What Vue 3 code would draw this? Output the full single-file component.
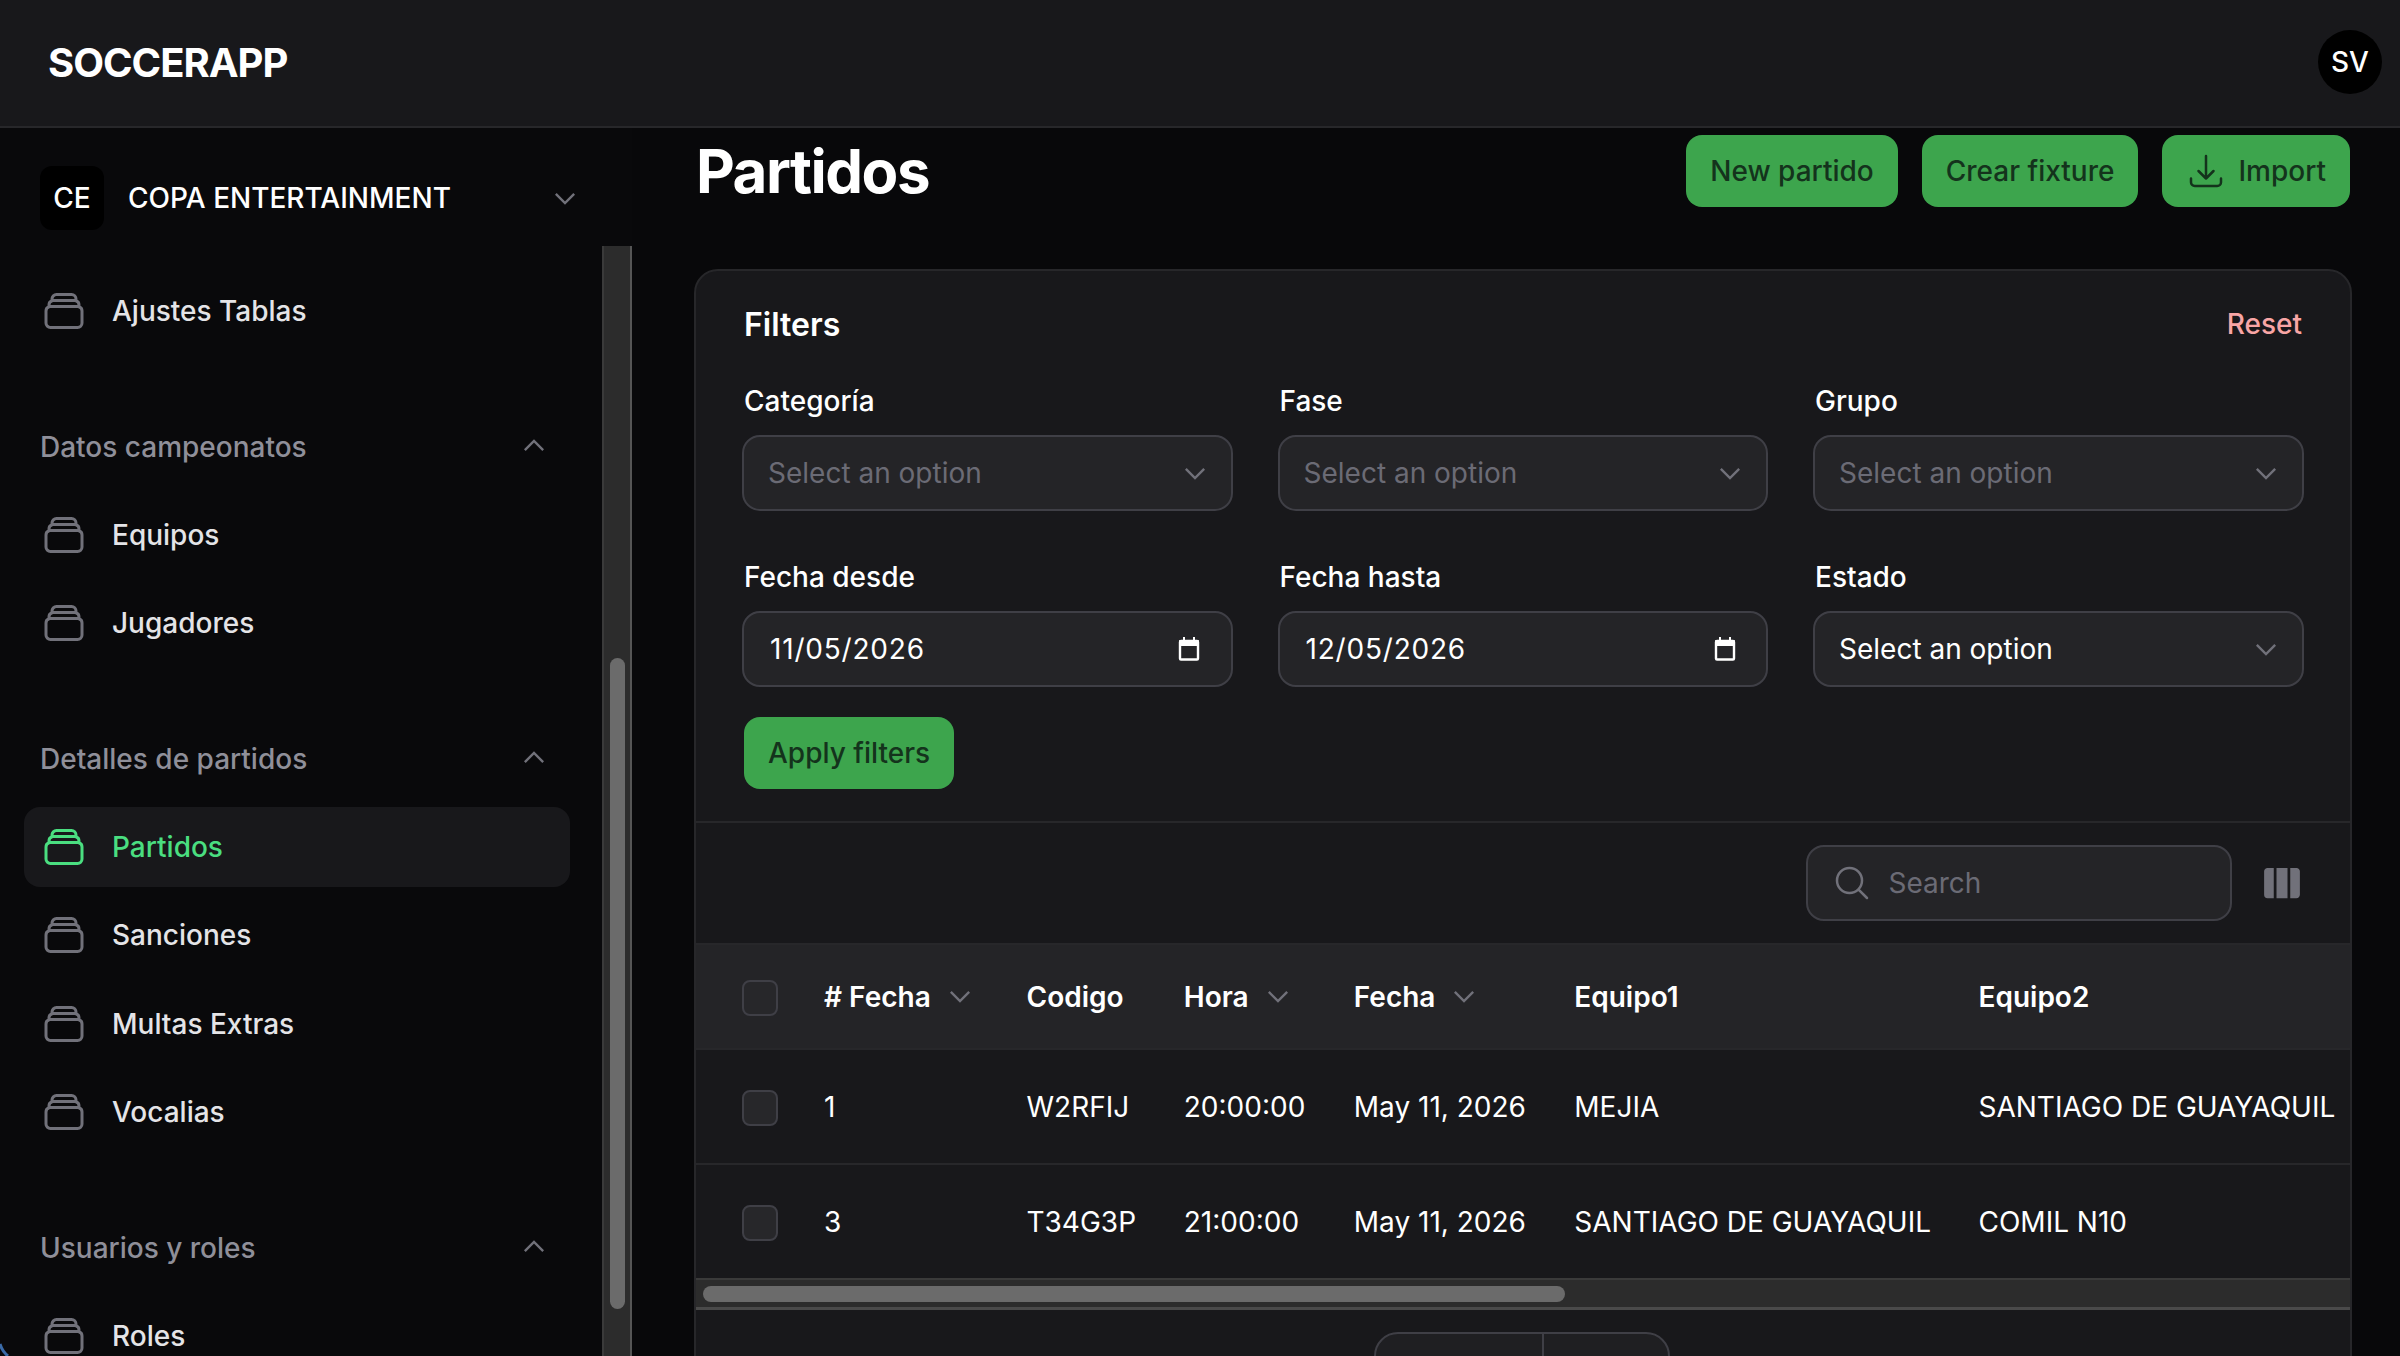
<script setup>
const navGroups = [
  { label: null, items: [{ name: 'Ajustes Tablas' }] },
  { label: 'Datos campeonatos', items: [{ name: 'Equipos' }, { name: 'Jugadores' }] },
  {
    label: 'Detalles de partidos',
    items: [
      { name: 'Partidos', active: true },
      { name: 'Sanciones' },
      { name: 'Multas Extras' },
      { name: 'Vocalias' },
    ],
  },
  { label: 'Usuarios y roles', items: [{ name: 'Roles' }] },
]

const filters = [
  { label: 'Categoría', placeholder: 'Select an option', type: 'select' },
  { label: 'Fase', placeholder: 'Select an option', type: 'select' },
  { label: 'Grupo', placeholder: 'Select an option', type: 'select' },
  { label: 'Fecha desde', value: '11/05/2026', type: 'date' },
  { label: 'Fecha hasta', value: '12/05/2026', type: 'date' },
  { label: 'Estado', value: 'Select an option', type: 'select' },
]

const columns = [
  { label: '# Fecha', sortable: true },
  { label: 'Codigo' },
  { label: 'Hora', sortable: true },
  { label: 'Fecha', sortable: true },
  { label: 'Equipo1' },
  { label: 'Equipo2' },
]

const rows = [
  ['1', 'W2RFIJ', '20:00:00', 'May 11, 2026', 'MEJIA', 'SANTIAGO DE GUAYAQUIL'],
  ['3', 'T34G3P', '21:00:00', 'May 11, 2026', 'SANTIAGO DE GUAYAQUIL', 'COMIL N10'],
]

const stackIcon = 'M6 6.878V6a2.25 2.25 0 012.25-2.25h7.5A2.25 2.25 0 0118 6v.878m-12 0c.235-.083.487-.128.75-.128h10.5c.263 0 .515.045.75.128m-12 0A2.25 2.25 0 004.5 9v.878m13.5-3A2.25 2.25 0 0119.5 9v.878m0 0a2.246 2.246 0 00-.75-.128H5.25c-.263 0-.515.045-.75.128m15 0A2.25 2.25 0 0121 12v6a2.25 2.25 0 01-2.25 2.25H5.25A2.25 2.25 0 013 18v-6c0-.98.626-1.813 1.5-2.122'
</script>

<template>
  <div class="app">
    <header class="topbar">
      <span class="brand">SOCCERAPP</span>
      <span class="avatar">SV</span>
    </header>

    <div class="layout">
      <aside class="sidebar">
        <div class="tenant">
          <span class="tenant-badge">CE</span>
          <span class="tenant-name">COPA ENTERTAINMENT</span>
          <svg class="chev tenant-chev" viewBox="0 0 24 14" aria-hidden="true"><path d="M2 2l10 10L22 2" /></svg>
        </div>

        <div class="side-scroll">
          <nav class="nav">
            <section v-for="(group, i) in navGroups" :key="i" class="nav-group">
              <div v-if="group.label" class="group-label">
                <span>{{ group.label }}</span>
                <svg class="chev chev-up" viewBox="0 0 24 14" aria-hidden="true"><path d="M2 12L12 2l10 10" /></svg>
              </div>
              <ul class="nav-list">
                <li v-for="item in group.items" :key="item.name" class="nav-item" :class="{ active: item.active }">
                  <svg class="nav-icon" viewBox="0 0 24 24" aria-hidden="true"><path :d="stackIcon" /></svg>
                  <span>{{ item.name }}</span>
                </li>
              </ul>
            </section>
          </nav>
          <div class="vbar"><div class="vthumb"></div></div>
        </div>
      </aside>

      <main class="main">
        <div class="page-head">
          <h1>Partidos</h1>
          <div class="actions">
            <button class="btn">New partido</button>
            <button class="btn">Crear fixture</button>
            <button class="btn btn-icon">
              <svg viewBox="0 0 24 24" aria-hidden="true"><path d="M3 16.5v2.25A2.25 2.25 0 0 0 5.25 21h13.5A2.25 2.25 0 0 0 21 18.75V16.5M16.5 12 12 16.5m0 0L7.5 12m4.5 4.5V3" /></svg>
              Import
            </button>
          </div>
        </div>

        <section class="card">
          <div class="filters">
            <div class="filters-head">
              <h2>Filters</h2>
              <span class="reset">Reset</span>
            </div>
            <div class="filter-grid">
              <div v-for="f in filters" :key="f.label" class="field">
                <label>{{ f.label }}</label>
                <div class="control" :class="f.type">
                  <span :class="{ placeholder: f.placeholder }">{{ f.placeholder || f.value }}</span>
                  <svg v-if="f.type === 'select'" class="chev" viewBox="0 0 24 14" aria-hidden="true"><path d="M2 2l10 10L22 2" /></svg>
                  <svg v-else class="calendar" viewBox="0 0 22 24" aria-hidden="true">
                    <path class="cal-fill" d="M5 0h2v3h8V0h2v3h3a1 1 0 0 1 1 1v5H1V4a1 1 0 0 1 1-1h3z" />
                    <rect class="cal-line" x="2" y="4" width="18" height="18.5" rx="1" />
                  </svg>
                </div>
              </div>
            </div>
            <button class="btn apply">Apply filters</button>
          </div>

          <div class="toolbar">
            <div class="search">
              <svg viewBox="0 0 24 24" aria-hidden="true"><path d="m21 21-5.197-5.197m0 0A7.5 7.5 0 1 0 5.196 5.196a7.5 7.5 0 0 0 10.607 10.607Z" /></svg>
              <span>Search</span>
            </div>
            <svg class="columns-icon" viewBox="0 0 24 24" aria-hidden="true">
              <path d="M15 3.75H9v16.5h6V3.75ZM16.5 20.25h3.375c1.035 0 1.875-.84 1.875-1.875V5.625c0-1.036-.84-1.875-1.875-1.875H16.5v16.5ZM4.125 3.75H7.5v16.5H4.125A1.875 1.875 0 0 1 2.25 18.375V5.625c0-1.036.84-1.875 1.875-1.875Z" />
            </svg>
          </div>

          <div class="table-wrap">
            <table>
              <thead>
                <tr>
                  <th class="check-cell"><span class="check"></span></th>
                  <th v-for="col in columns" :key="col.label">
                    <span class="th-inner">
                      {{ col.label }}
                      <svg v-if="col.sortable" class="chev" viewBox="0 0 24 14" aria-hidden="true"><path d="M2 2l10 10L22 2" /></svg>
                    </span>
                  </th>
                </tr>
              </thead>
              <tbody>
                <tr v-for="row in rows" :key="row[1]">
                  <td class="check-cell"><span class="check"></span></td>
                  <td v-for="(cell, i) in row" :key="i">{{ cell }}</td>
                </tr>
              </tbody>
            </table>
          </div>
          <div class="hbar"><div class="hthumb"></div></div>

          <div class="pager">
            <div class="pager-group">
              <span class="pager-a"></span>
              <span class="pager-b"></span>
            </div>
          </div>
        </section>
      </main>
    </div>

    <svg class="window-corner" viewBox="0 0 10 13" aria-hidden="true"><path d="M0 1c1.5 5 4 9 8 12" /></svg>
  </div>
</template>

<style scoped>
.app {
  position: relative;
  height: 1356px;
  overflow: hidden;
  display: flex;
  flex-direction: column;
  background: #09090b;
  color: #fff;
  font-family: Inter, "Liberation Sans", sans-serif;
  font-size: 28px;
}

.window-corner {
  position: absolute;
  left: 0;
  bottom: 0;
  width: 10px;
  height: 13px;
  fill: none;
  stroke: #3a6aa8;
  stroke-width: 3;
}

.topbar {
  height: 128px;
  flex-shrink: 0;
  box-sizing: border-box;
  display: flex;
  align-items: center;
  justify-content: space-between;
  padding: 0 18px 2px 48px;
  background: #18181b;
  border-bottom: 2px solid #27272a;
}

.brand {
  font-size: 40px;
  font-weight: 700;
  letter-spacing: -1px;
}

.avatar {
  width: 64px;
  height: 64px;
  border-radius: 50%;
  background: #000;
  display: flex;
  align-items: center;
  justify-content: center;
  font-weight: 500;
}

.layout {
  flex: 1;
  display: flex;
  min-height: 0;
}

.sidebar {
  width: 632px;
  flex-shrink: 0;
  display: flex;
  flex-direction: column;
  min-height: 0;
}

.tenant {
  display: flex;
  align-items: center;
  padding: 38px 56px 16px 40px;
}

.tenant-badge {
  width: 64px;
  height: 64px;
  border-radius: 12px;
  background: #000;
  display: flex;
  align-items: center;
  justify-content: center;
  font-weight: 500;
  margin-right: 24px;
}

.tenant-name {
  flex: 1;
  font-weight: 500;
  color: #fff;
}

.chev {
  width: 22px;
  height: 13px;
  flex-shrink: 0;
  fill: none;
  stroke: #71717a;
  stroke-width: 2.6;
}

.chev-up {
  margin-top: -3px;
}

.side-scroll {
  flex: 1;
  min-height: 0;
  display: flex;
  overflow: hidden;
}

.nav {
  flex: 1;
  padding: 25px 32px 0 24px;
  min-width: 0;
}

.nav-group + .nav-group {
  margin-top: 56px;
}

.group-label {
  height: 80px;
  margin-bottom: 7.5px;
  display: flex;
  align-items: center;
  justify-content: space-between;
  padding: 0 25px 0 16px;
  color: #8f8f99;
  font-weight: 500;
}

.nav-list {
  list-style: none;
  margin: 0;
  padding: 0;
  display: flex;
  flex-direction: column;
  gap: 8.5px;
}

.nav-item {
  height: 80px;
  display: flex;
  align-items: center;
  gap: 24px;
  padding: 0 16px;
  border-radius: 16px;
  color: #e4e4e7;
  font-weight: 500;
}

.nav-icon {
  width: 48px;
  height: 48px;
  flex-shrink: 0;
  fill: none;
  stroke: #71717a;
  stroke-width: 1.5;
  stroke-linecap: round;
  stroke-linejoin: round;
}

.nav-item.active {
  background: #18181b;
  color: #4ade80;
}

.nav-item.active .nav-icon {
  stroke: #4ade80;
}

.vbar {
  width: 30px;
  box-sizing: border-box;
  flex-shrink: 0;
  background: #2c2c2c;
  border-left: 2px solid #3a3a3a;
  border-right: 2px solid #555;
  padding: 412px 5px 47px 6px;
}

.vthumb {
  height: 100%;
  border-radius: 8px;
  background: #6b6b6b;
}

.main {
  flex: 1;
  min-width: 0;
  padding: 7px 48px 0 62px;
  background: #08080a;
}

.page-head {
  display: flex;
  align-items: center;
  justify-content: space-between;
  margin-bottom: 62px;
  padding-right: 2px;
}

h1 {
  margin: 0 0 0 2px;
  font-size: 60px;
  font-weight: 700;
  letter-spacing: -1.5px;
  line-height: 72px;
}

.actions {
  display: flex;
  gap: 24px;
}

.btn {
  height: 72px;
  box-sizing: border-box;
  border: 0;
  border-radius: 16px;
  padding: 0 24px;
  background: #3da54d;
  color: #14331c;
  font: 500 28px Inter, "Liberation Sans", sans-serif;
  display: inline-flex;
  align-items: center;
}

.btn-icon {
  gap: 12px;
}

.btn-icon svg {
  width: 40px;
  height: 40px;
  fill: none;
  stroke: #14331c;
  stroke-width: 1.5;
  stroke-linecap: round;
  stroke-linejoin: round;
}

.card {
  background: #18181b;
  border: 2px solid #27272a;
  border-radius: 24px;
}

.filters {
  padding: 32px 48px 32px 48px;
}

.filters-head {
  display: flex;
  align-items: center;
  justify-content: space-between;
  height: 42px;
  margin-bottom: 36px;
}

h2 {
  margin: 0;
  font-size: 32px;
  font-weight: 600;
}

.reset {
  color: #f8a5a5;
  font-weight: 500;
}

.filter-grid {
  display: grid;
  grid-template-columns: repeat(3, 490.5px);
  gap: 46px 45px;
  margin-left: -2px;
}

.field label {
  display: block;
  margin: 0 0 14px 2px;
  line-height: 40px;
  font-weight: 500;
}

.control {
  height: 76px;
  box-sizing: border-box;
  display: flex;
  align-items: center;
  justify-content: space-between;
  padding: 0 25px 0 24px;
  background: #242427;
  border: 2px solid #3f3f46;
  border-radius: 18px;
  font-weight: 400;
}

.control.date {
  padding: 0 30.5px 0 26px;
  letter-spacing: 0.8px;
}

.placeholder {
  color: #6b6b75;
}

.calendar {
  width: 22px;
  height: 24px;
}

.cal-fill {
  fill: #fff;
}

.cal-line {
  fill: none;
  stroke: #fff;
  stroke-width: 2.4;
}

.apply {
  margin-top: 30px;
  display: flex;
}

.toolbar {
  height: 122px;
  box-sizing: border-box;
  border-top: 2px solid #27272a;
  display: flex;
  align-items: center;
  justify-content: flex-end;
  gap: 28px;
  padding: 0 46.5px 0 0;
}

.search {
  width: 426px;
  height: 76px;
  box-sizing: border-box;
  display: flex;
  align-items: center;
  gap: 16.5px;
  padding: 0 28px 0 24.5px;
  background: #242427;
  border: 2px solid #3f3f46;
  border-radius: 18px;
  color: #6b6b75;
}

.search svg {
  width: 40px;
  height: 40px;
  fill: none;
  stroke: #71717a;
  stroke-width: 1.5;
  stroke-linecap: round;
  stroke-linejoin: round;
}

.columns-icon {
  width: 44px;
  height: 44px;
  fill: #71717a;
}

.table-wrap {
  overflow: hidden;
  border-top: 2px solid #27272a;
}

table {
  table-layout: fixed;
  border-collapse: collapse;
  width: 1656px;
}

th,
td {
  padding: 0 25px;
  text-align: left;
  white-space: nowrap;
}

th {
  height: 103px;
  background: #242427;
  font-weight: 600;
  border-bottom: 2px solid #27272a;
}

td {
  height: 113px;
  font-weight: 400;
  border-bottom: 2px solid #27272a;
}

tbody tr:last-child td {
  border-bottom: 0;
}

.th-inner {
  display: inline-flex;
  align-items: center;
  gap: 18px;
}

.check-cell {
  width: 57.5px;
  padding: 0 0 0 45.5px;
}

th:nth-child(2) { width: 152.5px; }
th:nth-child(3) { width: 107.3px; }
th:nth-child(4) { width: 120px; }
th:nth-child(5) { width: 170.5px; }
th:nth-child(6) { width: 354.2px; }
th:nth-child(7) { width: 349px; }

.check {
  display: block;
  width: 36px;
  height: 36px;
  margin-top: 3px;
  box-sizing: border-box;
  border-radius: 8px;
  background: #27272a;
  border: 2px solid #3f3f46;
}

.hbar {
  height: 32px;
  box-sizing: border-box;
  background: #2c2c2c;
  border-top: 2px solid #3a3a3a;
  border-bottom: 3px solid #4a4a4a;
  padding: 6px 0 0 7px;
}

.hthumb {
  width: 862px;
  height: 16px;
  border-radius: 8px;
  background: #6b6b6b;
}

.pager {
  display: flex;
  justify-content: center;
  padding-top: 22px;
  padding-right: 3px;
}

.pager-group {
  display: flex;
  height: 80px;
  box-sizing: border-box;
  border: 2px solid #3f3f46;
  border-radius: 24px;
  background: #1f1f22;
  overflow: hidden;
}

.pager-a {
  width: 166px;
  border-right: 2px solid #3f3f46;
}

.pager-b {
  width: 124px;
}
</style>

<style>
body {
  margin: 0;
  background: #09090b;
}
</style>
